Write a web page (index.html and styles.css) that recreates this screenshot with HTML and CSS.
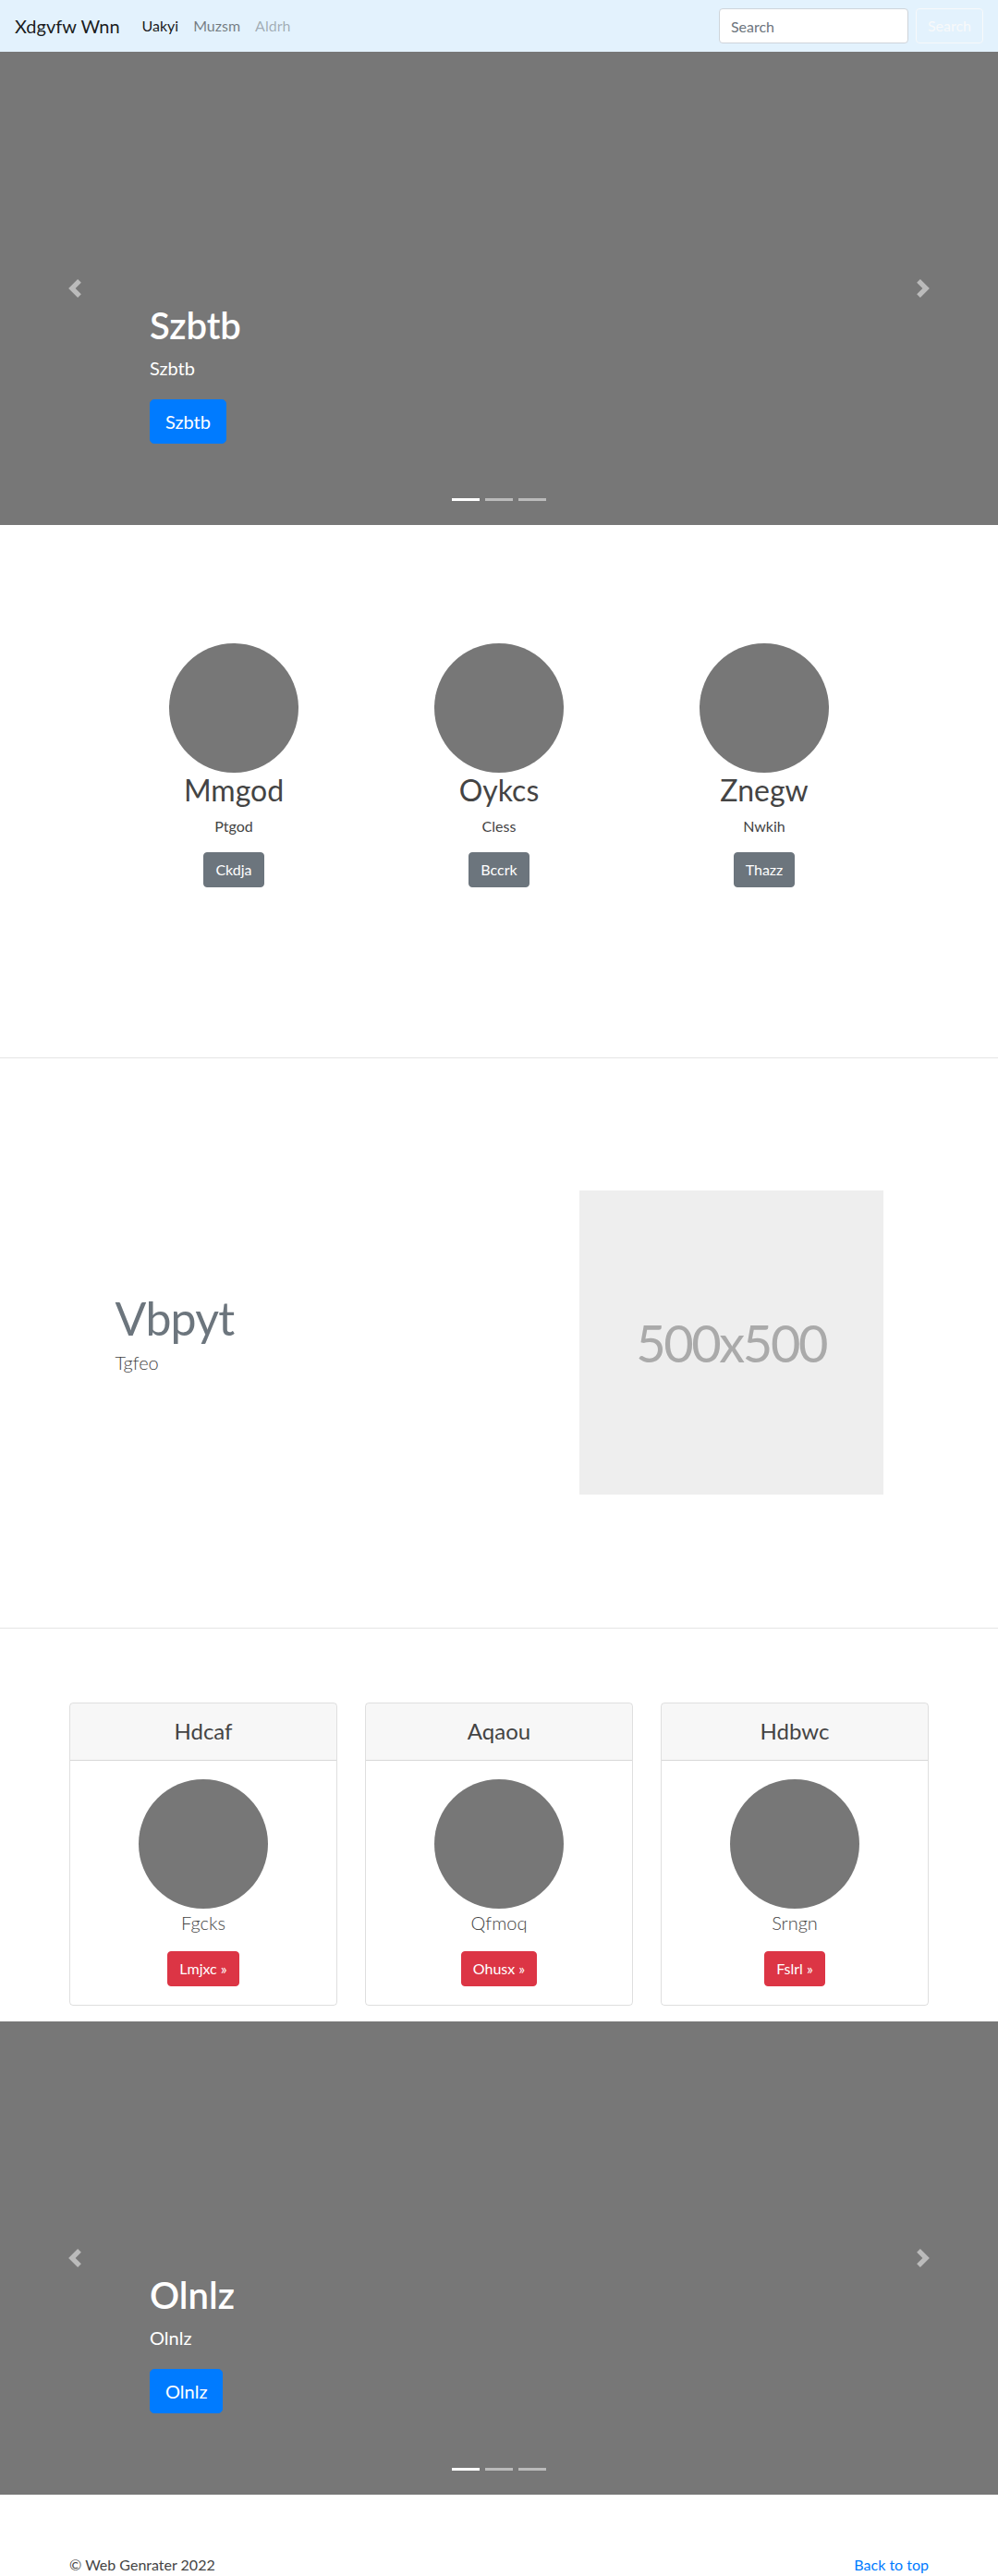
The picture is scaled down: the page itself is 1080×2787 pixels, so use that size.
FILE: index.html
```html
<!DOCTYPE html>
<html lang="en">
<head>
<meta charset="utf-8">
<title>Xdgvfw Wnn</title>
<link rel="stylesheet" href="styles.css">
</head>
<body>
<header class="navbar">
  <a class="brand" href="#">Xdgvfw Wnn</a>
  <nav class="nav">
    <a class="nav-link active" href="#">Uakyi</a>
    <a class="nav-link" href="#">Muzsm</a>
    <a class="nav-link disabled" href="#">Aldrh</a>
  </nav>
  <form class="search">
    <input class="search-input" type="text" placeholder="Search">
    <button class="btn btn-outline-light" type="button">Search</button>
  </form>
</header>

<section class="carousel">
  <ol class="indicators">
    <li class="active"></li><li></li><li></li>
  </ol>
  <a class="control prev" href="#"><svg width="20" height="20" viewBox="0 0 8 8"><path fill="#fff" d="M5.25 0l-4 4 4 4 1.5-1.5L4.25 4l2.5-2.5L5.25 0z"/></svg></a>
  <a class="control next" href="#"><svg width="20" height="20" viewBox="0 0 8 8"><path fill="#fff" d="M2.75 0l-1.5 1.5L3.75 4l-2.5 2.5L2.75 8l4-4-4-4z"/></svg></a>
  <div class="caption">
    <h1>Szbtb</h1>
    <p>Szbtb</p>
    <p class="actions"><a class="btn btn-lg btn-primary" href="#">Szbtb</a></p>
  </div>
</section>

<section class="marketing">
  <div class="narrow-row">
    <div class="mcol">
      <div class="circle"></div>
      <h2>Mmgod</h2>
      <p>Ptgod</p>
      <p class="actions"><a class="btn btn-secondary" href="#">Ckdja</a></p>
    </div>
    <div class="mcol">
      <div class="circle"></div>
      <h2>Oykcs</h2>
      <p>Cless</p>
      <p class="actions"><a class="btn btn-secondary" href="#">Bccrk</a></p>
    </div>
    <div class="mcol">
      <div class="circle"></div>
      <h2>Znegw</h2>
      <p>Nwkih</p>
      <p class="actions"><a class="btn btn-secondary" href="#">Thazz</a></p>
    </div>
  </div>
</section>

<hr class="divider">

<section class="featurette">
  <div class="narrow-row feat-row">
    <div class="feat-text">
      <h2 class="feat-heading">Vbpyt</h2>
      <p class="lead">Tgfeo</p>
    </div>
    <div class="feat-media">
      <div class="placeholder">500x500</div>
    </div>
  </div>
</section>

<hr class="divider">

<section class="cards">
  <div class="card">
    <div class="card-header"><h4>Hdcaf</h4></div>
    <div class="card-body">
      <div class="circle"></div>
      <p class="lead">Fgcks</p>
      <div class="actions"><a class="btn btn-danger" href="#">Lmjxc &raquo;</a></div>
    </div>
  </div>
  <div class="card">
    <div class="card-header"><h4>Aqaou</h4></div>
    <div class="card-body">
      <div class="circle"></div>
      <p class="lead">Qfmoq</p>
      <div class="actions"><a class="btn btn-danger" href="#">Ohusx &raquo;</a></div>
    </div>
  </div>
  <div class="card">
    <div class="card-header"><h4>Hdbwc</h4></div>
    <div class="card-body">
      <div class="circle"></div>
      <p class="lead">Srngn</p>
      <div class="actions"><a class="btn btn-danger" href="#">Fslrl &raquo;</a></div>
    </div>
  </div>
</section>

<section class="carousel">
  <ol class="indicators">
    <li class="active"></li><li></li><li></li>
  </ol>
  <a class="control prev" href="#"><svg width="20" height="20" viewBox="0 0 8 8"><path fill="#fff" d="M5.25 0l-4 4 4 4 1.5-1.5L4.25 4l2.5-2.5L5.25 0z"/></svg></a>
  <a class="control next" href="#"><svg width="20" height="20" viewBox="0 0 8 8"><path fill="#fff" d="M2.75 0l-1.5 1.5L3.75 4l-2.5 2.5L2.75 8l4-4-4-4z"/></svg></a>
  <div class="caption">
    <h1>Olnlz</h1>
    <p>Olnlz</p>
    <p class="actions"><a class="btn btn-lg btn-primary" href="#">Olnlz</a></p>
  </div>
</section>

<footer class="footer">
  <p>&copy; Web Genrater 2022</p>
  <p><a href="#">Back to top</a></p>
</footer>
</body>
</html>
```

FILE: styles.css
```css
* { box-sizing: border-box; }

body {
  margin: 0;
  font-family: Lato, "Open Sans", "Liberation Sans", sans-serif;
  font-size: 16px;
  line-height: 1.5;
  color: #444;
  background: #fff;
}

a { text-decoration: none; }

h1, h2, h4, p { margin-top: 0; }

/* Navbar */
.navbar {
  display: flex;
  align-items: center;
  height: 56px;
  padding: 8px 16px;
  background: #e3f2fd;
}
.brand {
  font-size: 20px;
  line-height: 30px;
  padding: 5px 0;
  margin-right: 16px;
  color: rgba(0, 0, 0, .9);
}
.nav { display: flex; }
.nav-link {
  padding: 8px;
  line-height: 24px;
  color: rgba(0, 0, 0, .5);
}
.nav-link.active { color: rgba(0, 0, 0, .9); }
.nav-link.disabled { color: rgba(0, 0, 0, .3); }

.search {
  margin-left: auto;
  display: flex;
  align-items: center;
}
.search-input {
  width: 205px;
  height: 38px;
  margin-right: 8px;
  padding: 6px 12px;
  font: inherit;
  color: #495057;
  background: #fff;
  border: 1px solid #ced4da;
  border-radius: 4px;
}
.search-input::placeholder { color: #6c757d; }

/* Buttons */
.actions {
  display: flex;
}
.mcol .actions, .card-body .actions { justify-content: center; }
.btn {
  display: inline-block;
  padding: 6px 12px;
  font: inherit;
  font-size: 16px;
  line-height: 24px;
  border: 1px solid transparent;
  border-radius: 4px;
  text-align: center;
  cursor: pointer;
}
.btn-lg {
  padding: 8px 16px;
  font-size: 20px;
  line-height: 30px;
  border-radius: 4.8px;
}
.btn-outline-light { color: #f8f9fa; border-color: #f8f9fa; background: transparent; }
.btn-primary { color: #fff; background: #007bff; border-color: #007bff; }
.btn-secondary { color: #fff; background: #6c757d; border-color: #6c757d; }
.btn-danger { color: #fff; background: #dc3545; border-color: #dc3545; }

/* Carousel */
.carousel {
  position: relative;
  height: 512px;
  background: #777;
  overflow: hidden;
}
.indicators {
  position: absolute;
  left: 0;
  right: 0;
  bottom: 0;
  margin: 0 0 16px;
  padding: 0;
  list-style: none;
  display: flex;
  justify-content: center;
}
.indicators li {
  width: 30px;
  height: 23px;
  margin: 0 3px;
  border-top: 10px solid transparent;
  border-bottom: 10px solid transparent;
  background: #fff;
  background-clip: padding-box;
  opacity: .5;
}
.indicators li.active { opacity: 1; }

.control {
  position: absolute;
  top: 0;
  bottom: 0;
  width: 15%;
  display: flex;
  align-items: center;
  justify-content: center;
  opacity: .5;
}
.control.prev { left: 0; }
.control.next { right: 0; }
.control svg { display: block; }

.caption {
  position: absolute;
  left: 15%;
  right: 15%;
  bottom: 48px;
  padding: 20px 0;
  color: #fff;
  text-align: left;
}
.caption h1 {
  font-size: 40px;
  line-height: 1.2;
  font-weight: 600;
  margin-bottom: 8px;
}
.caption p {
  font-size: 20px;
  line-height: 1.4;
  margin-bottom: 20px;
}

/* Marketing */
.marketing { padding: 128px 0 168px; }
.narrow-row {
  width: 861px;
  margin: 0 auto;
  display: grid;
}
.marketing .narrow-row { grid-template-columns: repeat(3, 1fr); }
.mcol {
  padding: 0 15px;
  text-align: center;
}
.circle {
  width: 140px;
  height: 140px;
  margin: 0 auto;
  border-radius: 50%;
  background: #777;
}
.mcol h2 {
  font-size: 32px;
  line-height: 1.2;
  font-weight: 400;
  margin-bottom: 8px;
}
.mcol p { margin: 0 12px 16px; }

.divider {
  margin: 0;
  border: 0;
  border-top: 1px solid rgba(0, 0, 0, .1);
}

/* Featurette */
.featurette { padding: 143px 0 144px; }
.feat-row {
  grid-template-columns: 7fr 5fr;
  align-items: center;
}
.feat-text { padding: 0 15px; }
.feat-heading {
  font-size: 50px;
  line-height: 1;
  font-weight: 400;
  letter-spacing: -0.8px;
  color: #6c757d;
  margin-bottom: 8px;
}
.lead {
  font-size: 20px;
  font-weight: 300;
  line-height: 1.5;
  margin-bottom: 16px;
}
.feat-media { padding: 0 15px; }
.placeholder {
  aspect-ratio: 1 / 1;
  width: 100%;
  background: #eee;
  color: #aaa;
  font-size: 56px;
  letter-spacing: -2.4px;
  display: flex;
  align-items: center;
  justify-content: center;
}

/* Cards */
.cards {
  width: 960px;
  margin: 0 auto;
  padding: 80px 15px 17px;
  display: grid;
  grid-template-columns: repeat(3, 1fr);
  column-gap: 30px;
}
.card {
  border: 1px solid rgba(0, 0, 0, .125);
  border-radius: 4px;
  text-align: center;
  overflow: hidden;
}
.card-header {
  padding: 16px 20px;
  background: rgba(0, 0, 0, .03);
  border-bottom: 1px solid rgba(0, 0, 0, .125);
}
.card-header h4 {
  margin: 0;
  font-size: 24px;
  line-height: 1.2;
  font-weight: 400;
}
.card-body { padding: 20px; }

/* Footer */
.footer {
  width: 960px;
  margin: 64px auto 0;
  padding: 0 15px;
  display: flex;
  justify-content: space-between;
}
.footer p { margin: 0 0 16px; }
.footer a { color: #007bff; }
```
